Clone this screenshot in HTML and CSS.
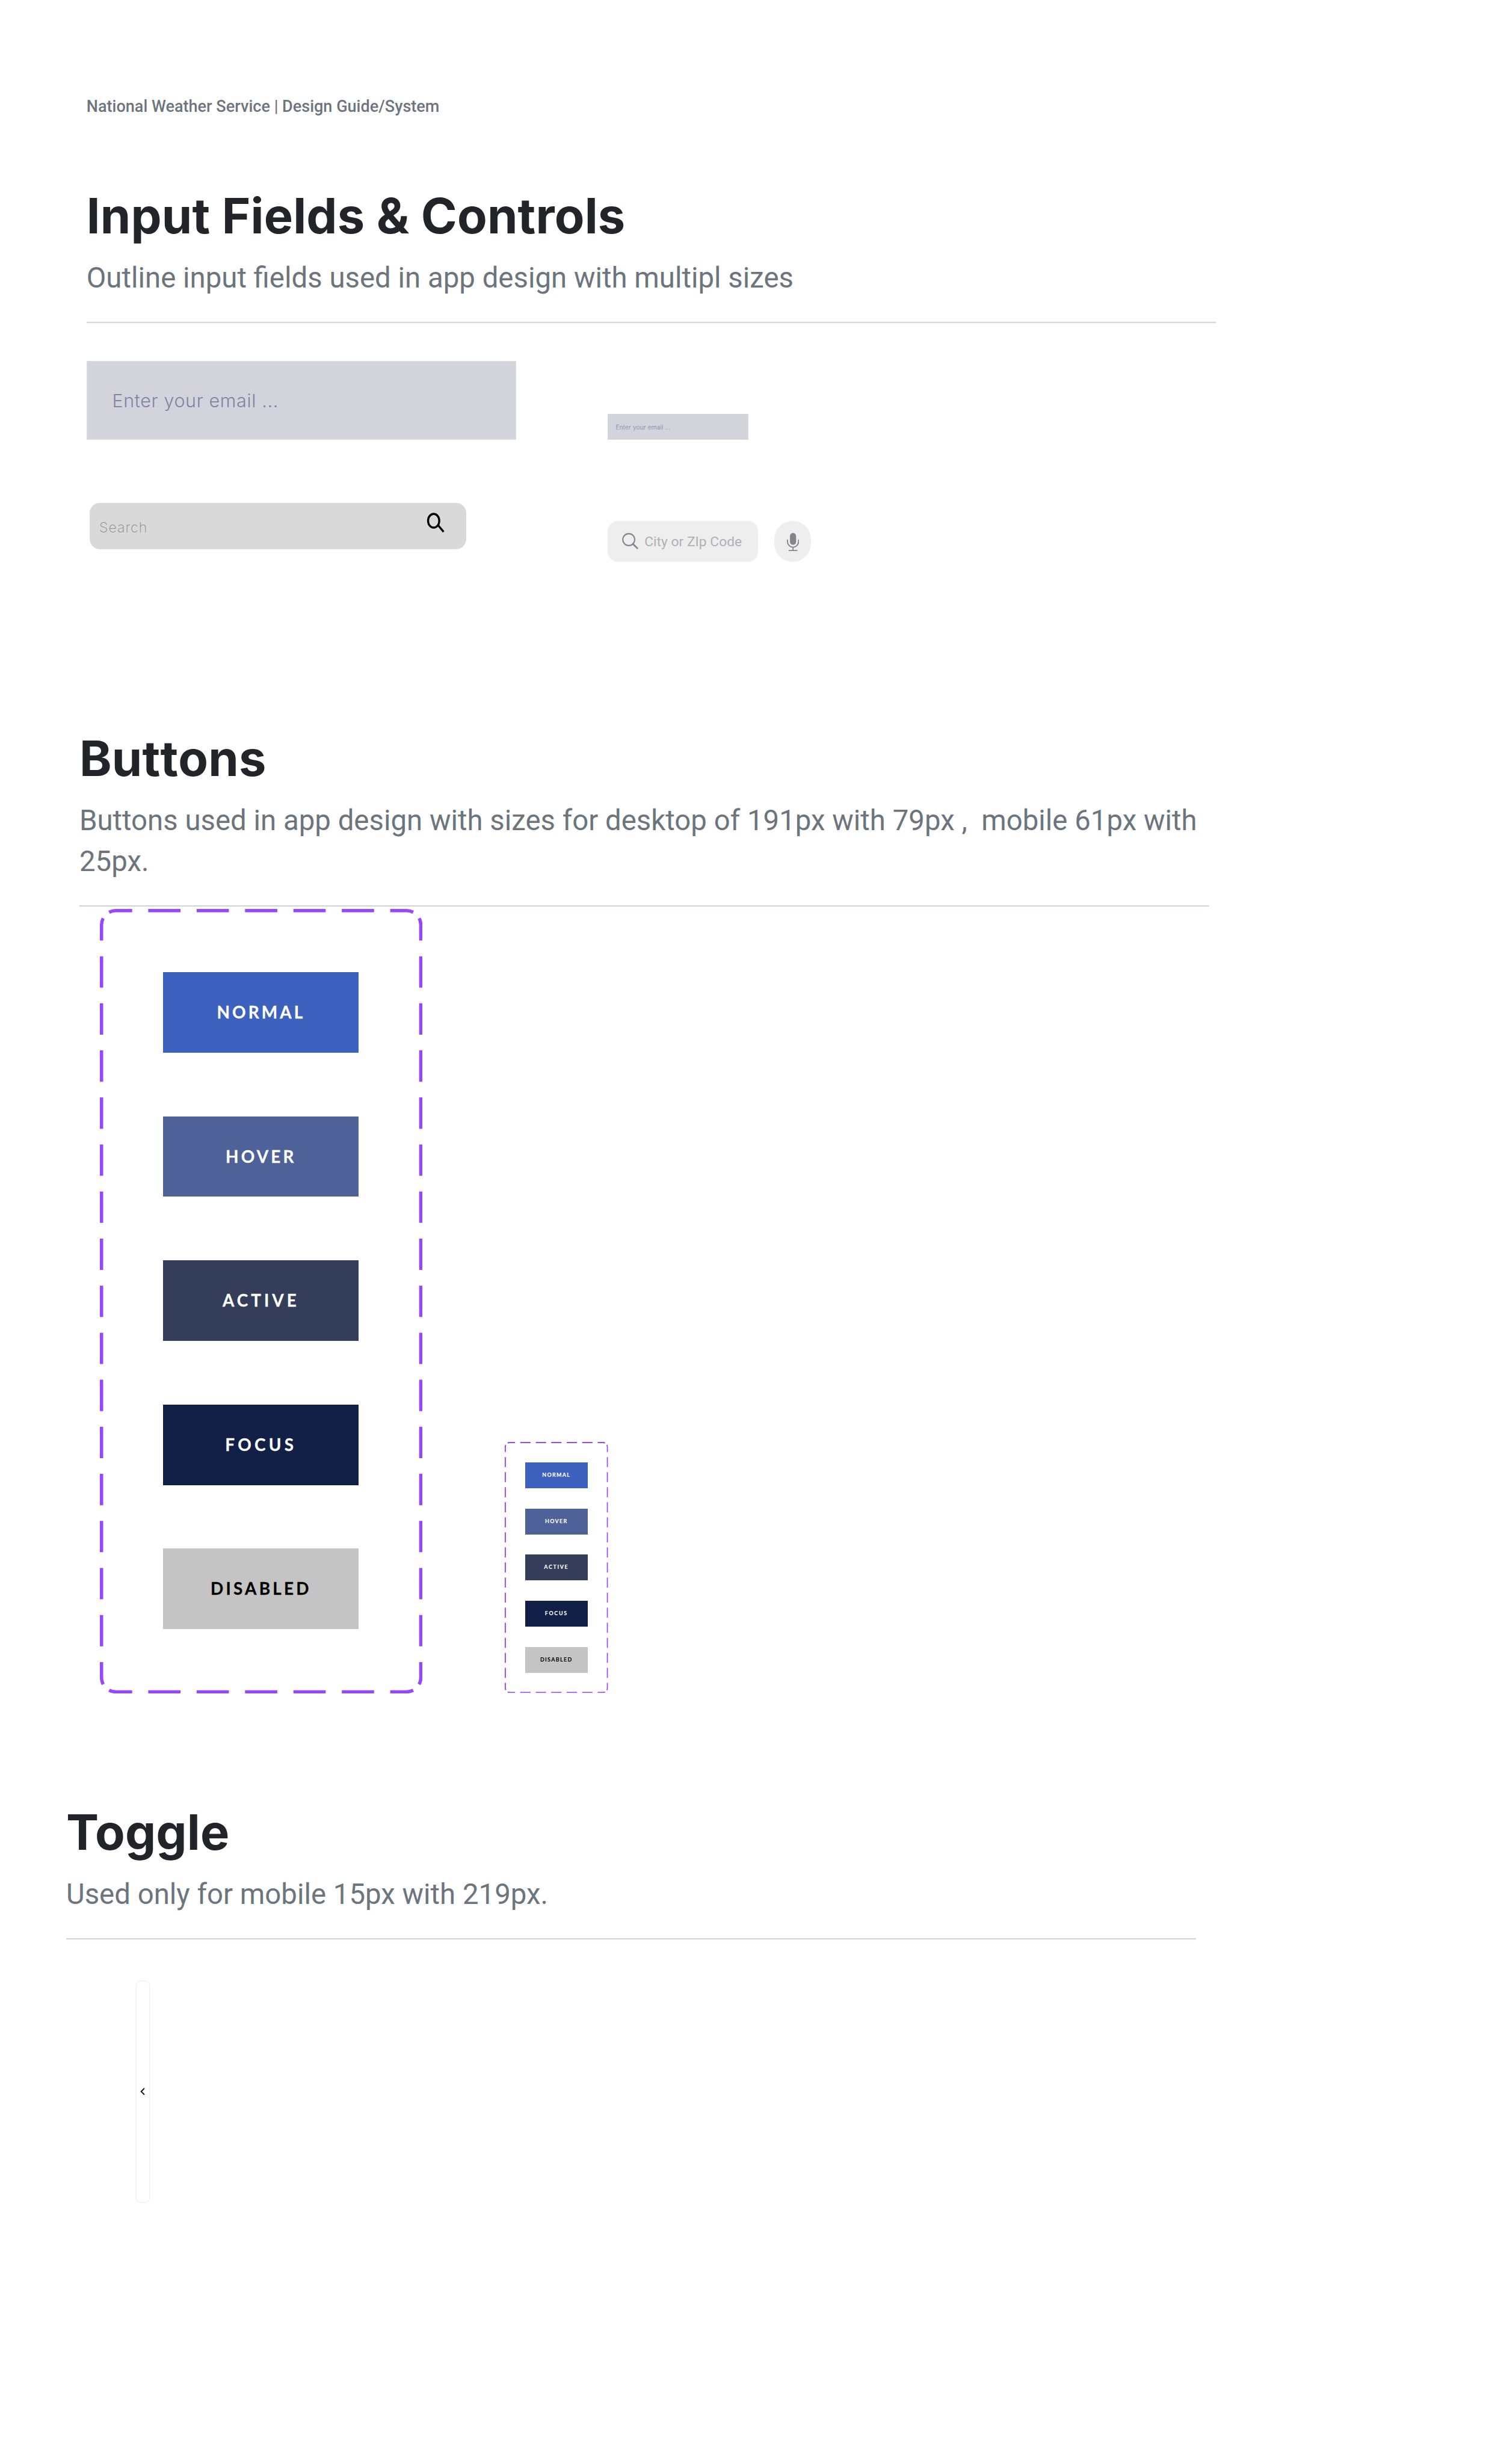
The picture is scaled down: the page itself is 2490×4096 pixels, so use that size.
FILE: index.html
```html
<!DOCTYPE html>
<html lang="en">
<head>
<meta charset="utf-8">
<title>National Weather Service | Design Guide/System</title>
<link rel="stylesheet" href="styles.css">
</head>
<body>
<svg class="defs" aria-hidden="true">
  <symbol id="dashed-frame" viewBox="0 0 634 1542">
    <g fill="none" stroke="#9747ff">
      <g stroke-dasharray="0 8.4 45.6 31.7 63.4 31.7 63.4 31.7 63.4 31.7 63.4 31.7 63.4 31.7 45.6 20">
        <path d="M11.45 11.45A28 28 0 0 1 31.25 3.25H602.75A28 28 0 0 1 622.55 11.45"/>
        <path transform="translate(0 1542) scale(1 -1)" d="M11.45 11.45A28 28 0 0 1 31.25 3.25H602.75A28 28 0 0 1 622.55 11.45"/>
      </g>
      <g stroke-dasharray="0 8.5 44.2 30.88 61.6 30.88 61.6 30.88 61.6 30.88 61.6 30.88 61.6 30.88 61.6 30.88 61.6 30.88 61.6 30.88 61.6 30.88 61.6 30.88 61.6 30.88 61.6 30.88 61.6 30.88 61.6 30.88 61.6 30.88 44.2 20">
        <path d="M11.45 11.45A28 28 0 0 0 3.25 31.25V1510.75A28 28 0 0 0 11.45 1530.55"/>
        <path transform="translate(634 0) scale(-1 1)" d="M11.45 11.45A28 28 0 0 0 3.25 31.25V1510.75A28 28 0 0 0 11.45 1530.55"/>
      </g>
    </g>
  </symbol>
</svg>

<header class="page-header">National Weather Service | Design Guide/System</header>

<section class="section section-inputs">
  <h1 class="title">Input Fields &amp; Controls</h1>
  <p class="subtitle">Outline input fields used in app design with multipl sizes</p>
  <hr class="rule">
  <div class="controls">
    <div class="controls-desktop">
      <div class="email"><span class="email-text">Enter your email ...</span></div>
      <div class="search">
        <span class="search-text">Search</span>
        <svg class="search-icon" viewBox="0 0 36 40" fill="none" stroke="#000">
          <ellipse cx="14" cy="17.3" rx="11" ry="13.5" stroke-width="4"/>
          <path d="M22.6 26L33.6 39.2" stroke-width="4"/>
        </svg>
      </div>
    </div>
    <div class="controls-mobile">
      <div class="email email-small"><span class="email-text">Enter your email ...</span></div>
      <div class="city-row">
        <div class="city">
          <svg class="city-icon" viewBox="0 0 32 32" fill="none" stroke="#858589">
            <circle cx="13.2" cy="13" r="11.7" stroke-width="2.5"/>
            <path d="M21.5 21.5L30 30" stroke-width="3.3" stroke-linecap="round"/>
          </svg>
          <span class="city-text">City or ZIp Code</span>
        </div>
        <div class="mic">
          <svg class="mic-icon" viewBox="0 0 24 36" fill="none" stroke="#858589" stroke-width="2.2" stroke-linecap="round">
            <rect x="6" y="0" width="12" height="23.4" rx="6" fill="#858589" stroke="none"/>
            <path d="M1.1 13.8V17A10.9 10.9 0 0 0 22.9 17V13.8M12 28V34M4.4 34.4H19.8"/>
          </svg>
        </div>
      </div>
    </div>
  </div>
</section>

<section class="section section-buttons">
  <h1 class="title title-unkerned">Buttons</h1>
  <p class="subtitle">Buttons used in app design with sizes for desktop of 191px with 79px ,&nbsp; mobile 61px with 25px.</p>
  <hr class="rule">
  <div class="frames">
    <div class="frame">
      <svg class="frame-outline"><use href="#dashed-frame"/></svg>
      <div class="btn btn-normal">NORMAL</div>
      <div class="btn btn-hover">HOVER</div>
      <div class="btn btn-active">ACTIVE</div>
      <div class="btn btn-focus">FOCUS</div>
      <div class="btn btn-disabled">DISABLED</div>
    </div>
    <div class="frame frame-small">
      <svg class="frame-outline"><use href="#dashed-frame"/></svg>
      <div class="btn btn-normal">NORMAL</div>
      <div class="btn btn-hover">HOVER</div>
      <div class="btn btn-active">ACTIVE</div>
      <div class="btn btn-focus">FOCUS</div>
      <div class="btn btn-disabled">DISABLED</div>
    </div>
  </div>
</section>

<section class="section section-toggle">
  <h1 class="title">Toggle</h1>
  <p class="subtitle">Used only for mobile 15px with 219px.</p>
  <hr class="rule">
  <div class="toggle">
    <svg class="toggle-icon" viewBox="0 0 10 16" fill="none" stroke="#000" stroke-width="2.1">
      <path d="M8.3 1.6L2 8L8.3 14.4"/>
    </svg>
  </div>
</section>
</body>
</html>
```

FILE: styles.css
```css
/* 1rem = 10 design units */
html {
  font-size: 8.4579px;
}

* {
  box-sizing: border-box;
}

body {
  margin: 0;
  height: 4096px;
  overflow: hidden;
  display: flex;
  flex-direction: column;
  background: #fff;
  font-family: Roboto, sans-serif;
}

.defs {
  position: absolute;
  width: 0;
  height: 0;
}

.page-header {
  margin: 19rem 0 0 17rem;
  height: 3.8rem;
  font-size: 3.2rem;
  line-height: 3.8rem;
  font-weight: 500;
  color: #6c757d;
}

.section {
  width: 222rem;
}

.section-inputs {
  margin: 13.8rem 0 0 17rem;
  height: 106.7rem;
}

.section-buttons {
  margin-left: 15.6rem;
  height: 211rem;
}

.section-toggle {
  margin-left: 13rem;
}

.title {
  margin: 0 0 2.5rem;
  font-family: Inter, sans-serif;
  font-size: 9.6rem;
  line-height: 11.6rem;
  font-weight: 700;
  letter-spacing: 0.018rem;
  color: #212529;
}

.title-unkerned {
  font-kerning: none;
}

.subtitle {
  margin: 0 0 4.6rem;
  font-size: 5.6rem;
  line-height: 8rem;
  color: #6c757d;
}

.rule {
  margin: 0;
  height: 0.2rem;
  border: 0;
  background: #ced4da;
}

/* Inputs */
.controls {
  display: flex;
  gap: 18rem;
  padding-top: 7.5rem;
}

.email {
  display: flex;
  align-items: center;
  width: 84.4rem;
  height: 15.4rem;
  padding-left: 4.8rem;
  border: 0.3rem solid #d8d9df;
  background: #d3d3dc;
  font-family: Inter, sans-serif;
  font-size: 3.6rem;
  line-height: 1;
  font-weight: 300;
  letter-spacing: 0.022em;
  color: #7f83a3;
}

.email-text {
  padding-top: 0.2rem;
}

.search {
  display: flex;
  justify-content: space-between;
  width: 74rem;
  height: 9.2rem;
  margin: 12.4rem 0 0 0.6rem;
  padding: 1.8rem 4.2rem 0 1.9rem;
  border-radius: 2rem;
  background: #d9d9d9;
}

.search-text {
  padding-top: 1.4rem;
  font-family: Inter, sans-serif;
  font-size: 2.75rem;
  line-height: 3.3rem;
  font-weight: 200;
  letter-spacing: 0.12rem;
  color: #8c8c8c;
}

.search-icon {
  width: 3.6rem;
  height: 4rem;
  overflow: visible;
}

.controls-mobile {
  padding-top: 10.4rem;
}

.email-small {
  width: 27.7rem;
  height: 5.05rem;
  padding-left: 1.5rem;
  border-width: 0.1rem;
  font-size: 1.19rem;
}

.email-small .email-text {
  padding-top: 0.1rem;
}

.city-row {
  display: flex;
  gap: 3.2rem;
  margin-top: 15.95rem;
}

.city {
  display: flex;
  align-items: center;
  width: 29.6rem;
  height: 8rem;
  padding-left: 2.9rem;
  border-radius: 2rem;
  background: #eee;
}

.city-icon {
  width: 3.2rem;
  height: 3.2rem;
}

.city-text {
  padding: 0.1rem 0 0 1.15rem;
  font-size: 2.7rem;
  line-height: 3.2rem;
  white-space: nowrap;
  color: #b0b0b6;
}

.mic {
  display: flex;
  justify-content: center;
  width: 7.2rem;
  height: 8rem;
  padding-top: 2.4rem;
  border-radius: 3.6rem;
  background: #eee;
}

.mic-icon {
  width: 2.4rem;
  height: 3.6rem;
}

/* Buttons: sizes are in em so that the small frame is the same block, scaled */
.frames {
  display: flex;
  align-items: flex-end;
  gap: 16.2rem;
  margin: 0.4rem 0 0 4rem;
}

.frame {
  position: relative;
  display: flex;
  flex-direction: column;
  gap: 12.525em;
  width: 63.4em;
  height: 154.2em;
  padding: 12.5em 0 0 12.5em;
  font-size: 1rem;
}

.frame-small {
  font-size: 0.32rem;
}

.frame-outline {
  position: absolute;
  inset: 0;
  width: 100%;
  height: 100%;
  stroke-width: 6.5px;
}

.frame-small .frame-outline {
  overflow: visible;
  stroke-width: 7.4px;
}

.btn {
  width: 11.636em;
  height: 4.788em;
  font-family: Lato, sans-serif;
  font-size: 3.3em;
  line-height: 4.788em;
  font-weight: 700;
  text-align: center;
  color: #fff;
  -webkit-text-stroke: 0.01em currentColor;
}

.btn-normal {
  background: #3d61be;
  letter-spacing: 0.147em;
}

.btn-hover {
  background: #4e6299;
  letter-spacing: 0.15em;
}

.btn-active {
  background: #343e5a;
  letter-spacing: 0.18em;
}

.btn-focus {
  background: #122048;
  letter-spacing: 0.19em;
}

.btn-disabled {
  background: #c4c4c4;
  color: #000;
  letter-spacing: 0.152em;
}

/* Toggle */
.toggle {
  display: flex;
  align-items: center;
  width: 3rem;
  height: 43.8rem;
  margin: 8rem 0 0 13.6rem;
  padding-left: 0.7rem;
  border: 2px solid #f5f5f5;
  border-radius: 1rem;
}

.toggle-icon {
  width: 1rem;
  height: 1.6rem;
}
```
